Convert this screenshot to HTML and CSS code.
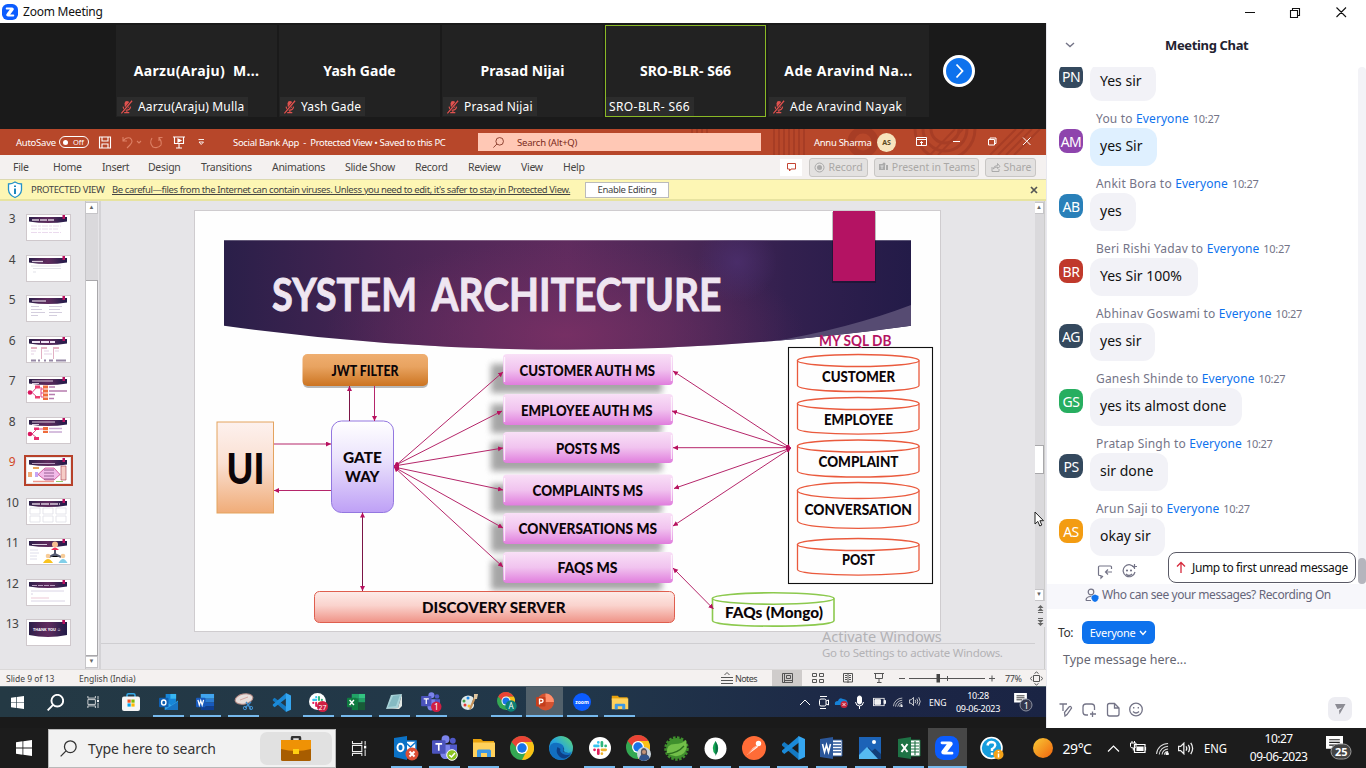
FILE: index.html
```html
<!DOCTYPE html>
<html lang="en">
<head>
<meta charset="utf-8">
<title>Zoom Meeting</title>
<link rel="stylesheet" href="styles.css">
</head>
<body>
<svg class="defs" width="0" height="0">
  <defs>
    <linearGradient id="banner" x1="0" x2="1"><stop offset="0" stop-color="#2a1f49"/><stop offset=".25" stop-color="#4a2554"/><stop offset=".5" stop-color="#5f2b5e"/><stop offset=".65" stop-color="#4d2857"/><stop offset=".82" stop-color="#33204f"/><stop offset="1" stop-color="#231b48"/></linearGradient>
    <radialGradient id="glow"><stop offset="0" stop-color="#7a3065" stop-opacity=".85"/><stop offset="1" stop-color="#6d2e62" stop-opacity="0"/></radialGradient>
    <radialGradient id="glow2"><stop offset="0" stop-color="#4d3070" stop-opacity=".75"/><stop offset="1" stop-color="#4d3070" stop-opacity="0"/></radialGradient>
    <linearGradient id="pink" x2="0" y2="1"><stop offset="0" stop-color="#f9e0f7"/><stop offset=".5" stop-color="#f1c3ef"/><stop offset="1" stop-color="#e07ddd"/></linearGradient>
    <linearGradient id="orange" x2="0" y2="1"><stop offset="0" stop-color="#efae70"/><stop offset=".4" stop-color="#e8a360"/><stop offset="1" stop-color="#cc7421"/></linearGradient>
    <linearGradient id="peach" x2="0" y2="1"><stop offset="0" stop-color="#fdf1ee"/><stop offset=".45" stop-color="#fae0d2"/><stop offset="1" stop-color="#f0ac78"/></linearGradient>
    <linearGradient id="violet" x2="0" y2="1"><stop offset="0" stop-color="#fff"/><stop offset=".4" stop-color="#ece4fc"/><stop offset="1" stop-color="#bea0f6"/></linearGradient>
    <linearGradient id="salmon" x2="0" y2="1"><stop offset="0" stop-color="#fdebe8"/><stop offset=".45" stop-color="#fad3cd"/><stop offset="1" stop-color="#ef9286"/></linearGradient>
    <linearGradient id="sun" x2="1" y2="1"><stop offset="0" stop-color="#f8cb36"/><stop offset="1" stop-color="#f1630d"/></linearGradient>
    <linearGradient id="edgeg" x1="0" x2="1" y1="1" y2="0"><stop offset="0" stop-color="#1570c0"/><stop offset=".5" stop-color="#27a5de"/><stop offset="1" stop-color="#63dc6c"/></linearGradient>
    <filter id="blur" x="-20%" y="-50%" width="140%" height="200%"><feGaussianBlur stdDeviation="3"/></filter>
    <marker id="ae" markerUnits="userSpaceOnUse" markerWidth="6" markerHeight="6" refX="5" refY="2.5" orient="auto-start-reverse"><path d="M0 0L5 2.5L0 5z" fill="#b8105f"/></marker>

    <symbol id="i-win" viewBox="0 0 16 16"><path d="M0 2.3L6.5 1.3V7.6H0zM7.3 1.2L16 0V7.6H7.3zM0 8.4H6.5V14.7L0 13.7zM7.3 8.4H16V16L7.3 14.8z" fill="#fff"/></symbol>
    <symbol id="i-search" viewBox="0 0 16 16"><circle cx="9.7" cy="6.3" r="5.5" fill="none" stroke="currentColor" stroke-width="var(--sw,1.2)"/><path d="M5.7 10.2L.6 15.4" stroke="currentColor" stroke-width="var(--sw,1.2)"/></symbol>
    <symbol id="i-view" viewBox="0 0 16 16"><path d="M.5 0V2.8H10.5V0M.5 16V13.2H10.5V16M.5 4.8H10.5V11.2H.5zM14 0V4M14 9V16" fill="none" stroke="#eee" stroke-width="1.1"/><path d="M12.8 5H15.2V8H12.8z" fill="#fff"/></symbol>
    <symbol id="i-outlook" viewBox="0 0 20 20"><path d="M7 1H18V9L13 14L7 9z" fill="#1686d9"/><path d="M12 1H18V6H12z" fill="#38b6f1"/><path d="M6 8L13 13L20 8V18H6z" fill="#32a7ec"/><path d="M6 18L20 9V18z" fill="#1874c4"/><rect y="5" width="10" height="10" rx="1" fill="#0f5fb3"/><ellipse cx="5" cy="10" rx="2.3" ry="2.7" fill="none" stroke="#fff" stroke-width="1.5"/></symbol>
    <symbol id="i-word" viewBox="0 0 20 20"><path d="M5 1H19V6H5z" fill="#41a5ee"/><path d="M5 6H19V10H5z" fill="#2b7cd3"/><path d="M5 10H19V14H5z" fill="#185abd"/><path d="M5 14H19V18H5z" fill="#103f91"/><rect y="5" width="10" height="10" rx="1" fill="#185abd"/><path d="M2 7.3L3.5 12.7L5 8L6.5 12.7L8 7.3" fill="none" stroke="#fff" stroke-width="1.3"/></symbol>
    <symbol id="i-excel" viewBox="0 0 20 20"><path d="M5 1H12V6H5z" fill="#21a366"/><path d="M12 1H19V6H12z" fill="#33c481"/><path d="M5 6H12V18H5z" fill="#107c41"/><path d="M12 6H19V10H12z" fill="#21a366"/><path d="M12 10H19V18H12z" fill="#185c37"/><rect y="5" width="10" height="10" rx="1" fill="#107c41"/><path d="M2.7 7.3L7.3 12.7M7.3 7.3L2.7 12.7" stroke="#fff" stroke-width="1.5"/></symbol>
    <symbol id="i-teams" viewBox="0 0 24 24"><circle cx="13" cy="4" r="3.8" fill="#7b83eb"/><circle cx="20" cy="5.5" r="2.8" fill="#5059c9"/><path d="M8 9H18V17a5 5 0 0 1-10 2z" fill="#7b83eb"/><path d="M17 9H24V15a4 4 0 0 1-6 3z" fill="#5059c9"/><rect y="5" width="13" height="13" rx="1" fill="#4b53bc"/><path d="M3.3 8.5H9.7M6.5 8.5V15" stroke="#fff" stroke-width="1.6"/></symbol>
    <symbol id="i-code" viewBox="0 0 24 24"><path d="M1 8L3.3 6L18 17.5V24L1 9.5z" fill="#1479c2"/><path d="M1 16L3.3 18L18 6.5V0L1 14.5z" fill="#1b8ad8"/><path d="M17.5 0L24 3V21L17.5 24z" fill="#35a6f0"/></symbol>
    <symbol id="i-slack" viewBox="0 0 22 22"><circle cx="11" cy="11" r="11" fill="#fff"/><g stroke-width="2.7" stroke-linecap="round"><path d="M9.300 5.300V5.400M9.300 8.900H5.500" stroke="#36c5f0"/><path d="M12.900 5.300V8.900M16.700 8.900H16.600" stroke="#2eb67d"/><path d="M12.900 16.700V16.600M12.900 12.800H16.700" stroke="#ecb22e"/><path d="M9.300 12.800V16.700M5.500 12.800H5.600" stroke="#e01e5a"/></g></symbol>
    <symbol id="i-chrome" viewBox="0 0 24 24"><circle cx="12" cy="12" r="12" fill="#34a853"/><path d="M12 6H22.4A12 12 0 0 1 12 24L17 14z" fill="#fbc116"/><path d="M1.6 6A12 12 0 0 1 22.4 6H12L8 13z" fill="#ea4335"/><circle cx="12" cy="12" r="6" fill="#fff"/><circle cx="12" cy="12" r="4.7" fill="#1a73e8"/></symbol>
    <symbol id="i-folder" viewBox="0 0 22 20"><path d="M0 1H8L10 3H21V7H0z" fill="#e8a10c"/><path d="M0 4.5H22V19H0z" fill="#ffd15c"/><path d="M4 19V13a1.5 1.5 0 0 1 1.5-1.5H16.500a1.5 1.5 0 0 1 1.500 1.500V19H14V15H8V19z" fill="#3d98e4"/></symbol>
    <symbol id="i-zoom" viewBox="0 0 24 24"><rect width="24" height="24" rx="8.500" fill="#0b5cff"/><path d="M7 6.800H14.500Q17.500 6.800 15.700 9L10 16.300M17 17.200H9.500Q6.500 17.200 8.300 15L14 7.700" fill="none" stroke="#fff" stroke-width="2.800" stroke-linecap="round"/></symbol>
    <symbol id="i-wifi" viewBox="0 0 14 14"><g fill="none" stroke="#ddd" stroke-width="1.100"><path d="M.6 13A12.500 12.500 0 0 1 13 1.500"/><path d="M3.500 13.500A10 10 0 0 1 13 4.500"/><path d="M6.500 13.500A7 7 0 0 1 13 7.500"/><path d="M9 13.500A4 4 0 0 1 13 10.200"/></g><circle cx="12" cy="12.700" r="1.200" fill="#fff"/></symbol>
    <symbol id="i-vol" viewBox="0 0 16 12"><g fill="none" stroke="#eee"><path d="M.5 4V8H2.500L5.500 11V1L2.500 4zM7.500 4Q9 6 7.500 8M9.700 2.500Q12 6 9.700 9.500M12 .8Q15.500 6 12 11.200"/></g></symbol>
    <symbol id="i-note" viewBox="0 0 16 15"><path d="M0 0H16V12H12V15L9 12H0z" fill="#fff"/><path d="M3 3.500H13M3 6H13M3 8.500H10" stroke="#222" stroke-width="1.100"/></symbol>
    <symbol id="i-batt" viewBox="0 0 14 9"><rect x=".5" y=".5" width="11.500" height="8" fill="none" stroke="#eee"/><path d="M2 2H8V7H2zM12 3H13.500V6H12z" fill="#eee"/></symbol>
    <symbol id="i-mute" viewBox="0 0 14 15"><rect x="5" y="1" width="5" height="8" rx="2.500" fill="#e0524f"/><path d="M3.300 7Q4 10.700 7.300 10.700Q10.700 10.700 11.500 7M7.400 10.700V13.500M4.500 13.500H10" stroke="#e0524f" stroke-width="1.200" fill="none"/><path d="M12.500 1L2 14" stroke="#242424" stroke-width="2.500"/><path d="M13 .8L1.500 14.300" stroke="#e0524f" stroke-width="1.400"/></symbol>

    <symbol id="t-banner" viewBox="0 0 43 25"><rect width="43" height="25" fill="#fff"/><path d="M2 2H40V6.500Q21 9.500 2 6.500z" fill="url(#banner)"/><path d="M35.500 0H38V4H35.500z" fill="#b8105f"/></symbol>
  </defs>
</svg>

<div class="titlebar"><svg class="zl"><use href="#i-zoom"/></svg><span>Zoom Meeting</span>
  <svg class="wctl" width="110" height="20" viewBox="0 0 110 20"><path d="M4 10.500H14M49.500 8.500H56.500V15.500H49.500zM51.500 8.500V6.500H58.500V13.500H56.500M95.500 5.500L105 15M105 5.500L95.500 15" fill="none" stroke="#111" stroke-width="1.100"/></svg>
</div>

<div class="main">
<section class="left">
  <div class="gallery">
    <div class="tile aar"><b>Aarzu(Araju)&nbsp; M...</b><span><svg><use href="#i-mute"/></svg>Aarzu(Araju) Mulla</span></div>
    <div class="tile"><b>Yash Gade</b><span><svg><use href="#i-mute"/></svg>Yash Gade</span></div>
    <div class="tile"><b>Prasad Nijai</b><span><svg><use href="#i-mute"/></svg>Prasad Nijai</span></div>
    <div class="tile active"><b>SRO-BLR- S66</b><span>SRO-BLR- S66</span></div>
    <div class="tile ade"><b>Ade Aravind Na...</b><span><svg><use href="#i-mute"/></svg>Ade Aravind Nayak</span></div>
    <svg class="next" width="32" height="32"><circle cx="16" cy="16" r="14.500" fill="#0e72ed" stroke="#fff" stroke-width="3"/><path d="M13.500 9.500L19.500 16L13.500 22.500" fill="none" stroke="#fff" stroke-width="1.800"/></svg>
  </div>

  <div class="ptitle">
    <span class="as">AutoSave</span><span class="tog"><i></i>Off</span>
    <svg width="120" height="20" viewBox="98 132 120 20" fill="none" stroke="#fff" stroke-width="1.100"><path d="M99.500 137H110.500V148H99.500zM102 137V141H108V137M102 148V144H108V148"/><g stroke="#dd8065"><path d="M123 137V141H127M123 141Q126 137 130 138Q134 141 130 145L127 148M137 141L139 143L141 141M152 138Q149 143 153 147Q158 149 161 145Q162 141 159 138M159 141V137.500H162.500"/></g><path d="M173 137H185M174.500 137V143.500H183.500V137M179 143.500V148M176 148H182"/><path d="M178 139L181 140.500L178 142z" fill="#fff"/><path d="M198.500 139.500H204M199 142L201.200 144.500L203.500 142z" stroke-width=".9"/></svg>
    <span class="ptt">Social Bank App&nbsp; -&nbsp; Protected View • Saved to this PC</span>
    <span class="psearch"><svg><use href="#i-search"/></svg>Search (Alt+Q)</span>
    <span class="puser">Annu Sharma</span><span class="pav">AS</span>
    <svg width="128" height="20" viewBox="910 132 128 20" fill="none" stroke="#fff" stroke-width="1"><path d="M917.500 137.500H927.500V145.500H917.500zM917.500 139.500H927.500M922.500 145V141.500M921 143L922.500 141.500L924 143M954 141.500H961M989.500 139.500H995.500V145H989.500zM991 139.500V138H997V143.500H995.500M1024 137.500L1031.500 145M1031.500 137.500L1024 145"/></svg>
    <svg class="pattern" viewBox="690 129 356 26" width="356" height="26" fill="none" stroke="#9b3622" stroke-width="2" opacity=".55"><path d="M692 129V134M697 129V134M702 129V134M707 129V134M774 129V155M779 129V155M784 129V155M789 129V155M794 129V155M799 129V155M804 129V155"/><circle cx="863" cy="142" r="12" stroke-width="7"/><path d="M930 155L955 129M938 155L963 129M990 155L1016 129M998 155L1024 129M1006 155L1032 129M1014 155L1040 129"/><path d="M915 129A30 30 0 0 0 975 129M923 129A22 22 0 0 0 967 129M931 129A14 14 0 0 0 959 129" stroke-width="3"/></svg>
  </div>

  <div class="ribbon">
    <span>File</span><span>Home</span><span>Insert</span><span>Design</span><span>Transitions</span><span>Animations</span><span>Slide Show</span><span>Record</span><span>Review</span><span>View</span><span>Help</span>
    <span class="cm"><svg width="11" height="11"><path d="M1.500 1.500H9.500V7H5L3.500 9V7H1.500z" fill="none" stroke="#c44432"/></svg></span>
    <span class="rb r1"><svg width="11" height="11"><circle cx="5.500" cy="5.500" r="4.500" fill="none" stroke="#aaa"/><circle cx="5.500" cy="5.500" r="2.500" fill="#aaa"/></svg>Record</span>
    <span class="rb r2"><svg width="11" height="11"><path d="M1 2H7V8H1zM8 3H10V8H8z" fill="#aaa"/><circle cx="6" cy="2" r="1.500" fill="#aaa"/><path d="M2.500 4H5.500M4 4V7" stroke="#ddd"/></svg>Present in Teams</span>
    <span class="rb r3"><svg width="11" height="11"><path d="M2 5V9.500H9V7M3 7Q4 3.500 7.500 3.500V1.500L10 4.500L7.500 6.500V5Q5 5 3 7z" fill="none" stroke="#aaa"/></svg>Share</span>
  </div>

  <div class="warn">
    <svg width="16" height="18" viewBox="0 0 16 18"><path d="M8 1Q11 3 14.500 3V9Q14 14 8 16.500Q2 14 1.500 9V3Q5 3 8 1z" fill="#fff" stroke="#2492c8" stroke-width="1.300"/><path d="M8 4.500V6M8 7.500V13" stroke="#1d87bf" stroke-width="2"/></svg>
    <span class="pv">PROTECTED VIEW</span><span class="care"><u>Be careful—files from the Internet can contain viruses. Unless you need to edit, it's safer to stay in Protected View.</u></span><span class="en">Enable Editing</span>
    <svg class="x" width="8" height="8"><path d="M1 1L7 7M7 1L1 7" stroke="#555" stroke-width="1.700"/></svg>
  </div>

  <div class="work">
    <div class="thumbs">
      <div class="th"><em>3</em><svg viewBox="0 0 43 25"><use href="#t-banner"/><path d="M5 5H27" stroke="#d9cbdc" stroke-width="1.300" stroke-dasharray="7 1"/><path d="M4 11H34M4 14H31M4 17.500H34" stroke="#e6d2ea" stroke-width=".8" stroke-dasharray="6 1 3 1"/></svg></div>
      <div class="th"><em>4</em><svg viewBox="0 0 43 25"><use href="#t-banner"/><path d="M5 5.500H16" stroke="#d9cbdc" stroke-width="1.300"/><path d="M4 10H34M6 12.500H34M6 16H9" stroke="#d4d4de" stroke-width=".7"/></svg></div>
      <div class="th"><em>5</em><svg viewBox="0 0 43 25"><use href="#t-banner"/><path d="M5 5H19" stroke="#d9cbdc" stroke-width="1.300"/><path d="M4 10.500H12M22 10.500H35M4 13.500H15M22 13.500H33M4 16.500H18M22 16.500H35M4 19.500H11M22 19.500H30" stroke="#c9c2d6" stroke-width=".8"/></svg></div>
      <div class="th"><em>6</em><svg viewBox="0 0 43 25"><use href="#t-banner"/><path d="M5 5H28" stroke="#f1e5f4" stroke-width="2" stroke-dasharray="8 1"/><path d="M4 11H10M15 11H20M27 11H32" stroke="#cf6286" stroke-width="1"/><path d="M4 14H9M4 17H7M17 14H22M17 17H25M28 14H32" stroke="#d9bcd9" stroke-width=".7"/><path d="M14.500 10V22M26.500 10V22" stroke="#cf7b9a" stroke-width=".6"/><path d="M4 23.500H9M11 23.500H13M17 23.500H19M22 23.500H26M29 23.500H39" stroke="#6a5680" stroke-width="1.800" opacity=".7"/></svg></div>
      <div class="th"><em>7</em><svg viewBox="0 0 43 25"><use href="#t-banner"/><path d="M5 4H26M5 6.500H12" stroke="#d9cbdc" stroke-width="1.200"/><path d="M5 15.500L10 10M5 15.500L10 20M14 10V20M14 12H17M14 16H17M14 20H17" stroke="#e0337a" stroke-width=".9" fill="none"/><circle cx="3" cy="15.500" r="2.300" fill="#d9165f"/><path d="M8 8.500H13V11.500H8zM8 19H13V21.500H8z" fill="#ea3f70"/><path d="M16 8.500H21V11.500H16zM16 12.500H21V15.500H16zM16 16.500H21V19.500H16zM16 20.500H21V23H16z" fill="#ee6c3b"/><path d="M22 10H28M22 14H40M22 17.500H28M22 21.500H27" stroke="#b67caf" stroke-width="1.300"/></svg></div>
      <div class="th"><em>8</em><svg viewBox="0 0 43 25"><use href="#t-banner"/><path d="M5 4H28M5 6.500H12" stroke="#d9cbdc" stroke-width="1"/><path d="M5 16L10 11M5 16L10 20M12 11H17" stroke="#e0337a" stroke-width=".9"/><circle cx="3" cy="16" r="2.300" fill="#d9165f"/><path d="M7 9.500H12V12H7zM7 19H12V22H7z" fill="#ea2f70"/><path d="M16 9H21V12H16zM16 12.800H21V15H16z" fill="#ee6c3b"/><path d="M22 10.500H35M22 14H35" stroke="#c9abd3" stroke-width="1.600"/></svg></div>
      <div class="th sel"><em>9</em><svg viewBox="0 0 43 25"><use href="#t-banner"/><path d="M5 5.500H28" stroke="#b59bbd" stroke-width="1"/><path d="M1 14H5V19H1z" fill="#f0ae7c"/><path d="M6 9H12V11H6z" fill="#e9a35d"/><path d="M8 14H11V19H8z" fill="#c5a4f5"/><path d="M11 16.500L18 10H27L33 16.500L27 22H18z" fill="#f2bbe9" stroke="#c32d78" stroke-width=".7"/><path d="M17 12H27M17 15H27M17 18H27M17 21H27" stroke="#7f477b" stroke-width=".8"/><path d="M34 8H39V22H34z" fill="#f6cdc7" stroke="#a43b4d" stroke-width=".6"/><path d="M6 23.500H27" stroke="#ee9a8f" stroke-width="1.500"/><path d="M29 23.500H36" stroke="#93c86b"/></svg></div>
      <div class="th"><em>10</em><svg viewBox="0 0 43 25"><use href="#t-banner"/><path d="M5 5H33" stroke="#d9cbdc" stroke-width="1.300" stroke-dasharray="8 1"/><path d="M3 9H13V15H3zM16 9H26V15H16zM29 9H39V15H29zM3 17H13V23H3zM16 17H26V23H16zM29 17H39V23H29z" fill="none" stroke="#dedee6" stroke-width=".8"/></svg></div>
      <div class="th"><em>11</em><svg viewBox="0 0 43 25"><use href="#t-banner"/><path d="M5 5.500H20" stroke="#d9cbdc"/><path d="M3 11H11M3 14H12M3 17H10M3 20H10" stroke="#d6d6e6" stroke-width=".8"/><path d="M28 11V17M22 18L28 15L34 18" stroke="#555b72" stroke-width="2"/><circle cx="28" cy="5.500" r="3" fill="#f7bd91"/><path d="M24 11Q28 6 32 11z" fill="#ef2f58"/><circle cx="21" cy="17" r="2.300" fill="#f7cc98"/><path d="M16 24Q21 16 26 24z" fill="#f9c31e"/><circle cx="36" cy="17" r="2.300" fill="#f7cc98"/><path d="M31.500 24Q36 16 40.500 24z" fill="#82cfe9"/></svg></div>
      <div class="th"><em>12</em><svg viewBox="0 0 43 25"><use href="#t-banner"/><path d="M5 5.500H28" stroke="#b59bbd" stroke-width="1" stroke-dasharray="5 1"/><path d="M4 11H37M4 14H6M4 21H38" stroke="#d1c9de" stroke-width=".8"/><path d="M4 18H22" stroke="#e5b2c4" stroke-width=".7"/></svg></div>
      <div class="th"><em>13</em><svg viewBox="0 0 43 25"><use href="#t-banner"/><path d="M2 2H40V15Q21 19 2 15z" fill="url(#banner)"/><path d="M35.500 0H38V4H35.500z" fill="#b8105f"/><text x="6" y="10.500" font-size="4.200" font-weight="bold" fill="#fff" textLength="28" lengthAdjust="spacingAndGlyphs">THANK YOU ☺</text></svg></div>
    </div>
    <div class="sb"><i class="bt">▲</i><i class="gap"></i><i class="kn"></i><i class="bt">▼</i></div>
    <div class="stage">
      <svg class="slide" width="747" height="422" viewBox="194 210 747 422">
        <rect x="194.500" y="210.500" width="746" height="421" fill="#fefefe" stroke="#cfcccf"/>
        <clipPath id="bc"><path d="M224 240.300H911V325.700Q567 373.500 224 325.700z"/></clipPath>
        <g clip-path="url(#bc)"><rect x="224" y="240" width="687" height="112" fill="url(#banner)"/><ellipse cx="565" cy="335" rx="240" ry="95" fill="url(#glow)"/><circle cx="737" cy="262" r="40" fill="url(#glow2)"/><path d="M735 347Q835 334 911 305V326V350H735z" fill="#564b72"/></g>
        <rect x="832" y="212" width="44" height="71" fill="#000" opacity=".25"/><rect x="833" y="211" width="42" height="70" fill="#b41363"/>
        <g class="lab"><text x="272" y="310.500" font-size="45" textLength="145" lengthAdjust="spacingAndGlyphs" class="st">SYSTEM</text><text x="431.500" y="310.500" font-size="45" textLength="290" lengthAdjust="spacingAndGlyphs" class="st">ARCHITECTURE</text></g>
        <g fill="#777" opacity=".65" filter="url(#blur)"><rect x="491" y="364" width="171" height="29"/><rect x="491" y="404" width="171" height="29"/><rect x="491" y="442" width="171" height="29"/><rect x="491" y="484" width="171" height="29"/><rect x="491" y="523" width="171" height="29"/><rect x="491" y="561" width="171" height="29"/></g>
        <g fill="url(#pink)"><rect x="503" y="354" width="170" height="31" rx="4"/><rect x="503" y="394" width="170" height="31" rx="4"/><rect x="503" y="432" width="170" height="31" rx="4"/><rect x="503" y="474.500" width="170" height="31" rx="4"/><rect x="503" y="513" width="170" height="31" rx="4"/><rect x="503" y="552" width="170" height="31" rx="4"/></g>
        <path d="M504.500 357V382M671.500 357V381M504.500 397V422M671.500 397V421M504.500 435V460M671.500 435V459M504.500 478V502M671.500 478V501M504.500 516V541M671.500 516V540M504.500 555V580M671.500 555V579" stroke="#fff" stroke-width="1.300" opacity=".75"/>
        <rect x="303" y="356" width="125" height="32" rx="5" fill="#888" opacity=".6"/><rect x="302.500" y="354" width="125.500" height="32" rx="5" fill="url(#orange)"/>
        <rect x="217" y="422" width="56.500" height="91" fill="url(#peach)" stroke="#e4a35f"/>
        <rect x="331.500" y="421" width="62" height="91.500" rx="10" fill="url(#violet)" stroke="#9377e0"/>
        <rect x="314.500" y="591.500" width="360" height="31" rx="5" fill="url(#salmon)" stroke="#df5e4e"/>
        <rect x="788.500" y="347.500" width="144" height="236" fill="none" stroke="#111" stroke-width="1.100"/>
        <g fill="none" stroke="#ea5a3d" stroke-width="1.300">
          <path d="M797.500 360.500V385.500C797.500 393.500 919 393.500 919 385.500V360.500"/><ellipse cx="858.200" cy="360.500" rx="60.800" ry="6"/>
          <path d="M797.500 403.500V428.500C797.500 436 919 436 919 428.500V403.500"/><ellipse cx="858.200" cy="403.500" rx="60.800" ry="6"/>
          <path d="M797.500 446V471C797.500 479 919 479 919 471V446"/><ellipse cx="858.200" cy="446" rx="60.800" ry="6"/>
          <path d="M797.500 490.500V520.500C797.500 531 919 531 919 520.500V490.500"/><ellipse cx="858.200" cy="490.500" rx="60.800" ry="8"/>
          <path d="M797.500 544.500V569.500C797.500 577 919 577 919 569.500V544.500"/><ellipse cx="858.200" cy="544.500" rx="60.800" ry="6"/>
          <g stroke="#8cc94e" stroke-width="1.600"><path d="M712.500 598.500V620.500C712.500 628 834 628 834 620.500V598.500"/><ellipse cx="773.200" cy="598.500" rx="60.800" ry="5.700"/></g>
        </g>
        <g class="lab">
          <text x="519.500" y="376" textLength="135.500" lengthAdjust="spacingAndGlyphs">CUSTOMER AUTH MS</text>
          <text x="521" y="416" textLength="131.500" lengthAdjust="spacingAndGlyphs">EMPLOYEE AUTH MS</text>
          <text x="556" y="453.500" textLength="64" lengthAdjust="spacingAndGlyphs">POSTS MS</text>
          <text x="532.500" y="495.500" textLength="110.500" lengthAdjust="spacingAndGlyphs">COMPLAINTS MS</text>
          <text x="518.500" y="533.500" textLength="138.500" lengthAdjust="spacingAndGlyphs">CONVERSATIONS MS</text>
          <text x="557.500" y="572.500" textLength="60" lengthAdjust="spacingAndGlyphs">FAQS MS</text>
          <text x="331.500" y="375.500" textLength="67" lengthAdjust="spacingAndGlyphs">JWT FILTER</text>
          <text x="343" y="463" textLength="39" lengthAdjust="spacingAndGlyphs">GATE</text>
          <text x="345" y="481.500" textLength="34.500" lengthAdjust="spacingAndGlyphs">WAY</text>
          <text x="226.500" y="484" font-size="42" textLength="38" lengthAdjust="spacingAndGlyphs" class="ui">UI</text>
          <text x="422" y="613" textLength="143.500" lengthAdjust="spacingAndGlyphs">DISCOVERY SERVER</text>
          <text x="819" y="346" textLength="72.500" lengthAdjust="spacingAndGlyphs" class="db">MY SQL DB</text>
          <text x="822" y="382" textLength="73" lengthAdjust="spacingAndGlyphs">CUSTOMER</text>
          <text x="824" y="424.500" textLength="69" lengthAdjust="spacingAndGlyphs">EMPLOYEE</text>
          <text x="818.500" y="467" textLength="80" lengthAdjust="spacingAndGlyphs">COMPLAINT</text>
          <text x="804.500" y="515" textLength="107.500" lengthAdjust="spacingAndGlyphs">CONVERSATION</text>
          <text x="842" y="565" textLength="33" lengthAdjust="spacingAndGlyphs">POST</text>
          <text x="725" y="617.500" textLength="98" lengthAdjust="spacingAndGlyphs">FAQs (Mongo)</text>
        </g>
        <g stroke="#b5266a" stroke-width="1" fill="none">
          <path d="M394 467L503 372" marker-start="url(#ae)" marker-end="url(#ae)"/><path d="M394 466L502 411" marker-start="url(#ae)" marker-end="url(#ae)"/><path d="M394 466L503 448" marker-start="url(#ae)" marker-end="url(#ae)"/><path d="M394 467L503 490" marker-start="url(#ae)" marker-end="url(#ae)"/><path d="M394 467L503 528" marker-start="url(#ae)" marker-end="url(#ae)"/><path d="M394 467L503 567" marker-start="url(#ae)" marker-end="url(#ae)"/>
          <path d="M791 448.500L673 371" marker-start="url(#ae)" marker-end="url(#ae)"/><path d="M791 448.500L672 411" marker-start="url(#ae)" marker-end="url(#ae)"/><path d="M791 447.700H673" marker-start="url(#ae)" marker-end="url(#ae)"/><path d="M791 448L674 488.500" marker-start="url(#ae)" marker-end="url(#ae)"/><path d="M791 448L673 526" marker-start="url(#ae)" marker-end="url(#ae)"/>
          <path d="M673 568L713.500 609" marker-start="url(#ae)" marker-end="url(#ae)"/>
          <path d="M349.500 421V386" stroke="#7c1547" marker-end="url(#ae)"/><path d="M374.500 386V421" marker-end="url(#ae)"/><path d="M274 444H331" marker-end="url(#ae)"/><path d="M331 490.500H274" marker-end="url(#ae)"/><path d="M362.500 512.500V591" stroke="#7c1547" marker-start="url(#ae)" marker-end="url(#ae)"/>
        </g>
      </svg>
      <div class="wm"><p>Activate Windows</p><small>Go to Settings to activate Windows.</small></div>
    </div>
    <div class="sb sr"><i class="bt">▲</i><i class="gap g2"></i><i class="kn k2"></i><i class="gap g3"></i><i class="bt">▼</i><svg width="11" height="26" fill="#666"><path d="M5.500 4L8.500 7H2.500zM5.500 7L8.500 10H2.500zM3 11H8V12H3zM3 17H8V18H3zM2.500 19H8.500L5.500 22zM2.500 22H8.500L5.500 25z"/></svg></div>
    <svg class="cursor" width="10" height="16"><path d="M1 1V13L3.800 10.400L5.800 15L7.800 14L5.900 9.700H9.500z" fill="#fff" stroke="#222"/></svg>
  </div>

  <div class="status">
    <span class="s1">Slide 9 of 13</span><span class="s2">English (India)</span>
    <svg width="326" height="17" viewBox="720 670 326 17" fill="none" stroke="#555" stroke-width="1"><rect x="772" y="670" width="30" height="17" fill="#cfcccb" stroke="none"/><path d="M721 677.500H733M721 680.500H733M721 683.500H733M724.500 675L727 672.500L729.500 675M782.500 673.500H792.500V682.500H782.500zM784.500 674V682M786.500 675.500H790.500V678.500H786.500zM785 680.500H792M812.500 673.500H816.500V676.500H812.500zM819.500 673.500H823.500V676.500H819.500zM812.500 679.500H816.500V682.500H812.500zM819.500 679.500H823.500V682.500H819.500zM843.500 673.500H852.500V682H843.500zM848 673.500V683M845 675.500H847M845 677.500H847M845 679.500H847M849 675.500H851M849 677.500H851M849 679.500H851M874 673.500H884M875.500 673.500V678.500H882.500V673.500M879 678.500V682M877 682.500H881.500M899 678.500H905M909 678.500H985M947.500 676V681M989 678.500H995M992 675.500V681.500M1033.500 675.500H1039.500V681.500H1033.500z"/><path d="M936.500 674H940V682.500H936.500z" fill="#444" stroke="none"/><path d="M1034.500 673.500L1036.500 672L1038.500 673.500M1034.500 683.500L1036.500 685L1038.500 683.500M1032 676.500L1030.500 678.500L1032 680.500M1041 676.500L1042.500 678.500L1041 680.500"/><g class="stt"><text x="735" y="682" textLength="22.500">Notes</text><text x="1005" y="681.500" textLength="17">77%</text></g></svg>
  </div>

  <div class="rbar">
    <div class="ricons">
      <span><svg width="13" height="13"><use href="#i-win"/></svg></span>
      <span class="sw"><svg width="17" height="17"><use href="#i-search"/></svg></span>
      <span><svg width="13" height="12"><use href="#i-view"/></svg></span>
      <span><svg width="18" height="18" viewBox="0 0 18 18"><path d="M5 5V2Q5 .8 6.500 .8H11.500Q13 .8 13 2V5" fill="none" stroke="#35a9e8" stroke-width="1.500"/><rect y="3.500" width="18" height="14.500" rx="2" fill="#f5f5f5"/><path d="M5.500 6.500H8.700V9.700H5.500z" fill="#f25022"/><path d="M9.400 6.500H12.600V9.700H9.400z" fill="#7fba00"/><path d="M5.500 10.400H8.700V13.600H5.500z" fill="#00a4ef"/><path d="M9.400 10.400H12.600V13.600H9.400z" fill="#ffb900"/></svg></span>
      <span class="on"><svg width="19" height="19"><use href="#i-outlook"/></svg></span>
      <span class="on"><svg width="19" height="19"><use href="#i-word"/></svg></span>
      <span class="on"><svg width="20" height="18" viewBox="0 0 20 18"><ellipse cx="10" cy="6" rx="9" ry="5" fill="#e7dedb" stroke="#b58b85" transform="rotate(-12 10 6)"/><path d="M6 7L14 4" stroke="#d6a7a0"/><path d="M12 9L17 16M17 9L11 15" stroke="#408dca" stroke-width="1.300"/><circle cx="11" cy="15" r="1.700" fill="none" stroke="#408dca"/><circle cx="17" cy="15" r="1.700" fill="none" stroke="#408dca"/></svg></span>
      <span><svg width="19" height="19"><use href="#i-code"/></svg></span>
      <span class="on"><svg width="19" height="19" viewBox="0 0 19 19"><use href="#i-slack" width="17" height="17"/><circle cx="13.500" cy="13.500" r="5.500" fill="#cf1f43"/><text x="9.600" y="16.500" font-size="7.500" fill="#fff" textLength="8" lengthAdjust="spacingAndGlyphs">27</text></svg></span>
      <span class="on"><svg width="19" height="19"><use href="#i-excel"/></svg></span>
      <span class="on"><svg width="18" height="18" viewBox="0 0 18 18"><path d="M6 2L17 1L13 15L1 16z" fill="#a9d3d8"/><path d="M8 3L15 2L11 13L3 14z" fill="#85bac2"/><path d="M13 15L17 1V13L14 16H1z" fill="#e2e8e4"/></svg></span>
      <span class="on"><svg width="21" height="20" viewBox="0 0 24 23"><use href="#i-teams" width="22" height="22"/><circle cx="17.500" cy="17" r="6" fill="#cf1f43"/><text x="15" y="20.500" font-size="9.500" fill="#fff">1</text></svg></span>
      <span><svg width="19" height="18" viewBox="0 0 19 18"><path d="M1 10Q1 3 8 2.500Q15 3 13 7Q11 10 14 11Q15 16 8 17Q1 16 1 10z" fill="#dfe9e9"/><circle cx="4" cy="8" r="1.500" fill="#43a047"/><circle cx="8" cy="5" r="1.500" fill="#1e88e5"/><circle cx="5" cy="12" r="1.500" fill="#e53935"/><circle cx="9" cy="13" r="1.500" fill="#fbc02d"/><path d="M16 2L10 16" stroke="#c7935b" stroke-width="2"/><path d="M14 1L18 1L17 6H14z" fill="#dfc6a0"/></svg></span>
      <span class="on"><svg width="20" height="20" viewBox="0 0 20 20"><use href="#i-chrome" width="18" height="18"/><circle cx="14" cy="14" r="5.700" fill="#0e8074"/><text x="11.500" y="17" font-size="8" fill="#fff">A</text></svg></span>
      <span class="on hi"><svg width="19" height="18" viewBox="0 0 19 18"><circle cx="10.500" cy="9" r="8.500" fill="#d35230"/><path d="M10.500 .5A8.500 8.500 0 0 1 19 9H10.500z" fill="#ff8f6b"/><rect x="1" y="4" width="9.500" height="9.500" rx="1" fill="#c43e1c"/><path d="M4.500 11.500V6.200H6Q8 6.200 8 7.800Q8 9.500 6 9.500H4.500" fill="none" stroke="#fff" stroke-width="1.300"/></svg></span>
      <span class="on"><svg width="18" height="18" viewBox="0 0 18 18"><circle cx="9" cy="9" r="9" fill="#0b5cff"/><text x="2.300" y="11" font-size="6" font-weight="bold" fill="#fff" textLength="13.500" lengthAdjust="spacingAndGlyphs">zoom</text></svg></span>
      <span class="on"><svg width="18" height="15"><use href="#i-folder"/></svg></span>
    </div>
    <svg class="rtray" width="160" height="30" viewBox="794 687 160 30" fill="none" stroke="#fff"><path d="M800 705L805 700L810 705"/><rect x="819.500" y="699" width="6.500" height="7" rx="1.500"/><path d="M826 701L828.500 700V705L826 704M820 696.500H827M820 708.500H826"/><path d="M835 705Q834 701 838 701Q839 697 843 699Q848 699 848 705z" fill="#1681d6" stroke="none"/><circle cx="844" cy="704.500" r="3.500" fill="#c6263c" stroke="none"/><path d="M842.500 703L845.500 706M845.500 703L842.500 706" stroke-width=".8"/><rect x="857.500" y="696" width="4" height="8" rx="2" fill="#fff"/><path d="M855.500 702Q856 706 859.500 706Q863 706 863.500 702M859.500 706V709"/><use href="#i-batt" x="873" y="697.500" width="13" height="9"/><use href="#i-wifi" x="893" y="697" width="10" height="10"/><use href="#i-vol" x="909" y="696" width="13" height="11"/><text x="929" y="705.500" class="tt" textLength="17.500" lengthAdjust="spacingAndGlyphs">ENG</text></svg>
    <div class="rclock">10:28<br>09-06-2023</div>
    <svg class="rnote" width="22" height="22" viewBox="0 0 22 22"><use href="#i-note" x="1" y="2" width="13" height="12"/><circle cx="13" cy="14" r="6" fill="#34384d" stroke="#8b90a0"/><text x="10.800" y="17.500" font-size="9" fill="#fff">1</text></svg>
  </div>
</section>

<aside class="chat">
  <header><svg width="10" height="6" viewBox="0 0 10 6"><path d="M1 1L5 4.500L9 1" fill="none" stroke="#747487" stroke-width="1.400"/></svg><b>Meeting Chat</b></header>
  <div class="list">
    <div class="msg"><div><i class="av c1">PN</i><span class="w1">Yes sir</span></div></div>
    <div class="msg"><p>You to <a>Everyone</a><s>10:27</s></p><div><i class="av c2">AM</i><span class="me w2">yes Sir</span></div></div>
    <div class="msg"><p>Ankit Bora to <a>Everyone</a><s>10:27</s></p><div><i class="av c3">AB</i><span class="w3">yes</span></div></div>
    <div class="msg"><p>Beri Rishi Yadav to <a>Everyone</a><s>10:27</s></p><div><i class="av c4">BR</i><span class="w4">Yes Sir 100%</span></div></div>
    <div class="msg"><p>Abhinav Goswami to <a>Everyone</a><s>10:27</s></p><div><i class="av c1">AG</i><span class="w5">yes sir</span></div></div>
    <div class="msg"><p>Ganesh Shinde to <a>Everyone</a><s>10:27</s></p><div><i class="av c5">GS</i><span class="w6">yes its almost done</span></div></div>
    <div class="msg"><p>Pratap Singh to <a>Everyone</a><s>10:27</s></p><div><i class="av c1">PS</i><span class="w7">sir done</span></div></div>
    <div class="msg"><p>Arun Saji to <a>Everyone</a><s>10:27</s></p><div><i class="av c6">AS</i><span class="w8">okay sir</span></div></div>
    <div class="acts"><svg width="42" height="18" viewBox="1096 563 42 18" fill="none" stroke="#747487" stroke-width="1.200"><path d="M1103 575L1101 577V574.500H1099.500Q1098.500 574.500 1098.500 573.500V566Q1098.500 565 1099.500 565H1110.500Q1111.500 565 1111.500 566V568M1112 571H1105.500M1108 568.500L1105.500 571L1108 573.500"/><path d="M1134.500 567A6 6 0 1 0 1135 571M1126 573Q1129 576 1132 573M1134.500 563V568M1132 565.500H1137"/><circle cx="1127" cy="569.500" r=".5"/><circle cx="1131" cy="569.500" r=".5"/></svg></div>
    <div class="jump"><svg width="10" height="13"><path d="M5 12V1.500M1 5.500L5 1.500L9 5.500" fill="none" stroke="#d62a3c" stroke-width="1.300"/></svg>Jump to first unread message</div>
    <div class="track"><i></i></div>
  </div>
  <div class="who"><svg width="14" height="14" viewBox="0 0 14 14"><circle cx="6" cy="4" r="2.800" fill="none" stroke="#747487" stroke-width="1.200"/><path d="M1 12.500Q1 8.500 6 8.500M1 12.500H6" fill="none" stroke="#747487" stroke-width="1.200"/><path d="M10 6.500L13.500 8V10.500Q13 13 10 14Q7 13 6.500 10.500V8z" fill="#0e72ed"/></svg>Who can see your messages? Recording On</div>
  <div class="compose">
    <div class="to"><span>To:</span><span class="ev">Everyone <svg width="8" height="6"><path d="M1 1L4 4.500L7 1" fill="none" stroke="#fff" stroke-width="1.400"/></svg></span></div>
    <div class="ph">Type message here...</div>
    <div class="tools"><svg width="90" height="18" viewBox="1058 700 90 18" fill="none" stroke="#747487" stroke-width="1.300"><path d="M1059.500 704H1067M1063 704V711M1065 716L1064.500 712.500L1069 707Q1071 705.500 1071.500 708L1067 714.500zM1088 715H1086Q1083 715 1083 712V707Q1083 704 1086 704H1091.500Q1094.500 704 1094.500 707V710M1092.500 711.500V717M1090 714H1096M1109.500 703.500H1114.500L1119 708V714Q1119 716 1117 716H1109.500Q1107.500 716 1107.500 714V705.500Q1107.500 703.500 1109.500 703.500M1114.500 703.500V708H1119"/><circle cx="1136" cy="709.500" r="6.300"/><path d="M1133 711.500Q1136 714.500 1139 711.500M1133.700 707V708.500M1138.300 707V708.500"/></svg>
      <span class="send"><svg width="12" height="12"><path d="M1 1H11.500L5.500 11.500L5 7.500L8 4.500L3.500 6z" fill="#8c8c94"/></svg></span></div>
  </div>
</aside>
</div>

<footer>
  <span class="fw"><svg width="16" height="16"><use href="#i-win"/></svg></span>
  <div class="fs"><svg width="17" height="17"><use href="#i-search"/></svg><span>Type here to search</span><i><svg width="32" height="26" viewBox="0 0 32 26"><path d="M12 4V2Q12 1 13 1H19Q20 1 20 2V4" fill="none" stroke="#333" stroke-width="2.500"/><rect x="1" y="4" width="30" height="21" rx="1.500" fill="#a85d00"/><path d="M1 4H31V13Q16 17 1 13z" fill="#ef9205"/><rect x="13" y="13" width="6" height="5" fill="#ffcf11"/></svg></i></div>
  <span class="fv"><svg width="17" height="15"><use href="#i-view"/></svg></span>
  <div class="fi">
    <span class="on"><svg width="26" height="26" viewBox="0 0 26 26"><path d="M12 6H23V18H12z" fill="#fff" stroke="#0f78d0" stroke-width="1.500"/><path d="M12 7L17.500 12L23 7" fill="none" stroke="#0f78d0" stroke-width="1.500"/><path d="M1 3L14 1V25L1 22z" fill="#0b72c6"/><ellipse cx="7.500" cy="12.500" rx="3" ry="3.800" fill="none" stroke="#fff" stroke-width="2"/><circle cx="19" cy="19" r="6.500" fill="#dc4f35"/><path d="M16.500 16.500L21.500 21.500M21.500 16.500L16.500 21.500" stroke="#fff" stroke-width="2"/></svg></span>
    <span class="on"><svg width="26" height="26" viewBox="0 0 26 26"><use href="#i-teams" width="25" height="25"/><circle cx="20" cy="20" r="5.300" fill="#8ac322" stroke="#fff"/><path d="M17.300 20L19.500 22L23 18" fill="none" stroke="#fff" stroke-width="1.500"/></svg></span>
    <span class="on"><svg width="22" height="20"><use href="#i-folder"/></svg></span>
    <span><svg width="24" height="24"><use href="#i-chrome"/></svg></span>
    <span><svg width="24" height="24" viewBox="0 0 24 24"><circle cx="12" cy="12" r="12" fill="url(#edgeg)"/><path d="M.2 12Q2 6 9 7Q15 8 15 13Q14 15 16 16.500Q20 18 23 15.500Q20 23.500 12 24Q1 23 .2 12z" fill="#126fc0"/><path d="M8.500 11Q6 17 11 21Q16 25 22 18Q18 20 14 18Q10 16 11.500 13z" fill="#0d3f86"/><path d="M14.500 11Q16 14 14 15Q17 18 22.500 15.500Q18 17.500 15 15.500Z" fill="#1e1e1e"/></svg></span>
    <span class="on"><svg width="22" height="22"><use href="#i-slack"/></svg></span>
    <span class="on"><svg width="25" height="26" viewBox="0 0 25 26"><use href="#i-chrome" width="24" height="24"/><circle cx="18" cy="19" r="7" fill="#cbd5dc"/><path d="M13 24Q14 19 18 19Q23 19 23.500 23.500Q18 28 13 24z" fill="#30548b"/><path d="M15 20Q14 13 18 13Q22 14 21 20z" fill="#56545c"/><circle cx="18" cy="17" r="2" fill="#c49478"/></svg></span>
    <span class="on"><svg width="25" height="25" viewBox="0 0 25 25"><circle cx="12.500" cy="12.500" r="11" fill="none" stroke="#3f8f2d" stroke-width="2.500" stroke-dasharray="2.500 1.500"/><circle cx="12.500" cy="12.500" r="10.500" fill="#3f8f2d"/><path d="M3 17Q2 8 11 8Q18 8 22 4Q25 15 17 19Q10 22 3 17z" fill="#72bf49"/><path d="M3 18Q14 17 20 10" stroke="#2c701e" fill="none" stroke-width="1.300"/></svg></span>
    <span class="on"><svg width="23" height="23" viewBox="0 0 23 23"><circle cx="11.500" cy="11.500" r="11" fill="#fff"/><path d="M11.500 4Q17 12 11.500 17.500Q6 12 11.500 4z" fill="#13aa52"/><path d="M11.500 4V19Q16.500 12 11.500 4z" fill="#0b6b45"/></svg></span>
    <span class="on"><svg width="24" height="24" viewBox="0 0 24 24"><circle cx="12" cy="12" r="12" fill="#ff6c37"/><path d="M5 19L11 12L15 9L16 11L12 14z" fill="#fff"/><circle cx="16.500" cy="7.500" r="2.700" fill="#fff"/><path d="M6 18L15 9.500" stroke="#ff6c37" stroke-width=".7"/></svg></span>
    <span class="on"><svg width="24" height="24"><use href="#i-code"/></svg></span>
    <span class="on"><svg width="24" height="24" viewBox="0 0 24 24"><path d="M12 4H23V20H12z" fill="#fff" stroke="#2b579a"/><path d="M14 7H22M14 10H22M14 13H22M14 16H22" stroke="#2b579a" stroke-width="1.300"/><path d="M1 3L14 1V23L1 21z" fill="#2b579a"/><path d="M3.500 8L5.500 16L7.500 9L9.500 16L11.500 8" fill="none" stroke="#fff" stroke-width="1.600"/></svg></span>
    <span class="on"><svg width="22" height="22" viewBox="0 0 22 22"><rect width="22" height="22" fill="#1c63b7"/><path d="M9 10L13 14L16 11.500L22 17V22L9 22z" fill="#123f79"/><path d="M0 18L8 10L19 22H0z" fill="#56baf1"/><circle cx="15" cy="5" r="2" fill="#fff"/></svg></span>
    <span class="on"><svg width="24" height="24" viewBox="0 0 24 24"><path d="M12 4H23V20H12z" fill="#fff" stroke="#1e7245"/><path d="M14 7H22M14 10H22M14 13H22M14 16H22M18 5V19" stroke="#1e7245" stroke-width="1.100"/><path d="M1 3L14 1V23L1 21z" fill="#1e7245"/><path d="M4.500 8L10.500 16M10.500 8L4.500 16" stroke="#fff" stroke-width="2"/></svg></span>
    <span class="on hi"><svg width="24" height="24"><use href="#i-zoom"/></svg></span>
  </div>
  <svg class="help" width="24" height="24" viewBox="0 0 24 24"><circle cx="11.500" cy="12" r="10.500" fill="#169ddd" stroke="#fff" stroke-width="1.600"/><path d="M7.500 9.500Q8 6 11.700 6Q15.500 6.300 15.200 9.500Q14.500 12 12 13V15M12 16.500V19" fill="none" stroke="#fff" stroke-width="2.400"/><circle cx="18.500" cy="18.500" r="5" fill="#f5a218"/><path d="M18.500 15V16.300M18.500 17.500V21.500" stroke="#fff" stroke-width="1.500"/></svg>
  <svg width="20" height="20"><circle cx="10" cy="10" r="10" fill="url(#sun)"/></svg>
  <span class="deg">29°C</span>
  <svg class="ftray" width="130" height="40" viewBox="1112 728 130 40" fill="none" stroke="#fff" stroke-width="1.200"><path d="M1117 751.500L1122.500 746L1128 751.500"/><path d="M1143.500 744.500H1154V752.500H1143.500zM1154.500 747V750.500"/><path d="M1146 747H1152V750.500H1146z" fill="#fff"/><path d="M1139.500 743H1145V746.500Q1145 748 1142.300 748Q1139.500 748 1139.500 746.500zM1141 741V743M1143.500 741V743M1142.300 748V750.500" stroke-width="1"/><use href="#i-wifi" x="1165" y="742" width="13" height="13"/><use href="#i-vol" x="1187" y="742" width="17" height="13"/><text x="1213" y="752.500" class="ft" textLength="23" lengthAdjust="spacingAndGlyphs">ENG</text></svg>
  <div class="fclock">10:27<br>09-06-2023</div>
  <svg class="fnote" width="28" height="26" viewBox="0 0 28 26"><use href="#i-note" x="0" y="1" width="17" height="16"/><rect x="5" y="9" width="20" height="15" rx="7.500" fill="#444" stroke="#999"/><text x="9" y="20.500" font-size="11" font-weight="bold" fill="#fff" textLength="12.500" lengthAdjust="spacingAndGlyphs">25</text></svg>
</footer>
</body>
</html>
```
FILE: styles.css
```css
*{box-sizing:border-box}
body{margin:0;width:1366px;height:768px;overflow:hidden;background:#fff;font-family:"Noto Sans","Open Sans",sans-serif;font-size:12px;white-space:nowrap;color:#111;display:flex;flex-direction:column}
svg{display:block;flex:none}
.defs{position:absolute}
i,em,s{font-style:normal;text-decoration:none}
.titlebar{height:23px;flex:none;display:flex;align-items:center;padding-left:2px;gap:5px;font-size:12px;letter-spacing:-.22px}
.zl{width:16px;height:16px}
.wctl{margin-left:auto;margin-right:15px}
.main{height:705px;flex:none;display:flex}
.left{width:1046px;background:#1a1a1a;display:flex;flex-direction:column}
.gallery{height:106px;flex:none;display:flex;gap:2px;padding:2px 0 0 116px}
.tile{width:161px;height:92px;flex:none;background:#222;color:#fff;display:flex;flex-direction:column;justify-content:flex-end;align-items:flex-start;padding:1px}
.tile b{width:100%;text-align:center;font-size:14px;line-height:20px;margin-bottom:16px;letter-spacing:.05px}
.tile span{height:19px;background:#2c2c2c;display:flex;align-items:center;gap:5px;padding:0 4px 0 3px;font-size:12px;letter-spacing:.15px}
.tile span svg{width:13px;height:14px}
.tile.aar b{letter-spacing:.35px}
.tile.active{border:1px solid #8ab926;padding:0}
.tile.active span{letter-spacing:.4px}
.tile.ade b{letter-spacing:.5px}
.tile.ade span{letter-spacing:.35px}
.next{margin:30px 0 0 12px}
.ptitle{height:26px;flex:none;background:#b7472a;color:#fff;font-size:9.5px;display:flex;align-items:center;padding-left:16px;position:relative}
.ptitle>*{z-index:1;flex:none}
.as{width:43px;letter-spacing:-.25px}
.tog{width:30px;height:12px;border:1px solid #fff;border-radius:6px;display:flex;align-items:center;gap:5px;font-size:7.5px;padding-left:3px;margin-right:9px}
.tog i{width:5px;height:5px;border-radius:50%;background:#fff}
.ptt{width:245px;margin-left:15px;letter-spacing:-.33px}
.psearch{width:283px;height:18px;background:#ffc8b5;color:#7a2a1a;display:flex;align-items:center;gap:13px;padding-left:15px;letter-spacing:-.2px}
.psearch svg{width:11px;height:11px}
.puser{width:62px;margin-left:53px;letter-spacing:-.3px}
.pav{width:19px;height:19px;border-radius:50%;background:#f7e4bd;color:#5b4a22;display:flex;align-items:center;justify-content:center;font-size:7px;font-weight:bold;margin:0 13px 0 1px}
.ptitle>.pattern{position:absolute;right:0;top:0;z-index:0}
.ribbon{height:24px;flex:none;background:#f4f1f0;color:#484644;font-size:10.5px;display:grid;grid-template-columns:40px 49px 46px 53px 71px 73px 70px 53px 53px 42px 217px 29px 65px 111px 51px;align-items:center;padding-left:13px;letter-spacing:-.3px}
.cm{width:22px;height:17px;background:#fff;display:flex;align-items:center;justify-content:center}
.rb{height:19px;border:1px solid #c8c6c4;border-radius:3px;background:#e3e1e0;color:#aaa8a6;display:flex;align-items:center;justify-content:center;gap:3px;letter-spacing:-.05px}
.r1{width:59px}.r2{width:105px;letter-spacing:-.05px}.r3{width:51px}
.warn{height:22px;flex:none;background:#fdf6b4;border-top:1px solid #dcd9b0;border-bottom:2px solid #e7e3a0;color:#444;font-size:9.5px;display:flex;align-items:center;padding-left:7px}
.pv{width:81px;margin-left:8px;letter-spacing:-.35px}
.care{width:473px;letter-spacing:-.41px}
.en{width:84px;height:16px;background:#fff;border:1px solid #bbb;display:flex;align-items:center;justify-content:center;letter-spacing:-.35px}
.x{margin-left:361px}
.work{height:468px;flex:none;background:#e6e5e8;display:flex;position:relative}
.thumbs{width:85px;padding-top:7px}
.th{height:40.550px;display:flex;align-items:flex-start;padding-left:3px}
.th em{width:18px;display:flex;justify-content:center;font-size:12px;line-height:21px;color:#444;letter-spacing:-.6px}
.th svg{width:43px;height:25px;margin:7px 0 0 6px;outline:1px solid #cfc8cc}
.th.sel em{color:#d24726}
.th.sel svg{outline:2px solid #b7412a;outline-offset:1px;background:#fff}
.sb{width:13px;display:flex;flex-direction:column;padding-top:1px;border-left:1px solid #c6c5c8;background:#dad9dc}
.bt{height:12px;flex:none;background:#fff;border:1px solid #c6c5c8;border-left:0;font-size:6px;line-height:9px;text-align:center;color:#666}
.gap{height:66px;flex:none}
.kn{height:376px;flex:none;background:#fff;border:1px solid #a9a8ab;border-left:0}
.stage{width:936px;padding:9px 0 0 93px;border-left:2px solid #d4d3d6;margin-left:1px;background:linear-gradient(#e6e5e8 442px,#cfced1 442px,#cfced1 443px,#e6e5e8 443px);position:relative}
.sr{width:11px;margin-left:-1px;border-right:1px solid #ccc;flex:none}
.g2{height:231px}.k2{height:29px}.g3{height:115px}
.sr svg{background:#e6e5e8}
.sr::after{content:"";flex:1;background:#e6e5e8}
.wm{position:absolute;left:721px;top:426px;color:#b3b2b5}
.wm p{margin:0;font-size:14.500px;line-height:18px}
.wm small{display:block;font-size:11.500px;line-height:16px;letter-spacing:-.28px}
.cursor{position:absolute;left:1034px;top:310px}
.lab{font-family:"Lato","Inter",sans-serif;font-weight:900;font-size:14.500px;fill:#0c0508}
.lab .st{fill:#efe6f1;font-weight:700;stroke:#efe6f1;stroke-width:.9}
.lab .db{fill:#b41363;font-weight:700}
.status{height:17px;flex:none;background:#f4f1f0;border-top:1px solid #dad8d8;display:flex;align-items:center;padding-left:6px;font-size:8.500px;color:#444;width:1046px;overflow:hidden}
.s1{width:73px}.s2{width:641px}
.stt{font-size:9px;fill:#444;stroke:none}
.rbar{height:31px;flex:none;background:linear-gradient(90deg,#243944,#21374a 55%,#1c2646 85%,#1a2444);border-top:1px solid #50626b;display:flex;align-items:center;color:#fff}
.ricons{width:639px;height:30px;display:grid;grid-template-columns:repeat(17,37.630px);margin-left:-1px;flex:none}
.ricons span{display:flex;align-items:center;justify-content:center;color:#fff}
.ricons .on,.fi .on{background:linear-gradient(#76b9ed,#76b9ed) bottom/31px 2px no-repeat}
.ricons .hi{background:linear-gradient(#76b9ed,#76b9ed) bottom/100% 2px no-repeat,#52616b}
.sw{--sw:1.8}
.rtray{margin-left:156px}
.tt{font-size:9px;fill:#fff;stroke:none}
.rclock{width:48px;text-align:center;font-size:9px;line-height:13.500px;letter-spacing:-.3px}
.rnote{margin-left:11px}
.chat{width:320px;border-left:1px solid #e8e8ee;display:flex;flex-direction:column}
.chat header{height:44px;flex:none;display:flex;align-items:center;padding-left:18px;font-size:13px;gap:90px;color:#222230}
.chat header b{letter-spacing:-.35px}
.list{height:517px;flex:none;overflow:hidden;position:relative}
.msg{height:65px}
.msg:first-child{height:46px;margin-top:-4px}
.msg p{margin:0 0 0 49px;height:19px;line-height:19px;font-size:12px;color:#747487;letter-spacing:.2px}
.msg a{color:#0e72ed;letter-spacing:.08px}
.msg s{font-size:11px;margin-left:4px;letter-spacing:-.3px}
.msg>div{display:flex;padding-left:12px}
.av{width:24px;height:24px;border-radius:8px;margin:1px 7px 0 0;color:#fff;font-size:14px;display:flex;align-items:center;justify-content:center;letter-spacing:-.5px}
.c1{background:#34495e}.c2{background:#8e44ad}.c3{background:#2980b9}.c4{background:#c0392b}.c5{background:#27ae60}.c6{background:#f39c12}
.msg>div span{height:38px;border-radius:12px;background:#f2f2f7;padding-left:10px;font-size:14px;line-height:35px}
.msg>div .me{background:#dff0ff}
.w1{width:66px}.w2{width:67px}.w3{width:46px}.w4{width:108px}.w5{width:65px}.w6{width:152px}.w7{width:78px}.w8{width:75px}
.acts{padding:0 0 0 49px}
.jump{position:absolute;left:121px;top:485px;width:188px;height:31px;border:1px solid #5a5a66;border-radius:8px;background:#fff;display:flex;align-items:center;gap:6px;padding-left:7px;font-size:12px;letter-spacing:-.38px}
.track{position:absolute;right:0;top:0;width:8px;height:517px;background:#f3f3f7;border-radius:4px}
.track i{display:block;margin-top:491px;height:26px;border-radius:4px;background:#b5b5bd}
.who{height:25px;flex:none;background:#f7f7fb;color:#66667a;font-size:12px;display:flex;align-items:center;gap:3px;padding:0 0 4px 38px;letter-spacing:-.41px}
.compose{display:flex;flex-direction:column;flex:1;padding:12px 14px 7px 11px;color:#333}
.to{display:flex;align-items:center;gap:9px;letter-spacing:-.4px}
.ev{width:73px;height:23px;border-radius:6px;background:#0e72ed;color:#fff;display:flex;align-items:center;justify-content:center;gap:4px;font-size:11px;letter-spacing:-.25px}
.ph{padding:7px 0 0 5px;font-size:12.500px;color:#666672}
.tools{margin-top:auto;display:flex;justify-content:space-between;align-items:center}
.send{width:24px;height:24px;border-radius:7px;background:#ededf2;display:flex;align-items:center;justify-content:center}
footer{height:40px;flex:none;background:#1c1c1c;display:flex;align-items:center;color:#fff}
.fw{width:48px;padding-left:16px}
.fs{width:288px;height:39px;align-self:flex-end;background:#f2f2f2;border:1px solid #b9b9b9;color:#333;display:flex;align-items:center;padding-left:11px;gap:11px;font-size:14px}
.fs span{width:161px;letter-spacing:-.05px}
.fs i{width:72px;height:33px;border-radius:7px;background:#e1e1e1;display:flex;align-items:center;justify-content:center}
.fv{width:51px;padding-left:15px}
.fi{height:40px;display:grid;grid-template-columns:repeat(15,38.650px);flex:none}
.fi span{display:flex;align-items:center;justify-content:center}
.fi .hi{background:linear-gradient(#76b9ed,#76b9ed) bottom/100% 2px no-repeat,#474747}
.help{margin:0 29px 0 13px}
.deg{width:50px;padding-left:10px;font-size:14px;letter-spacing:-.5px}
.ft{font-size:12px;fill:#fff;stroke:none}
.fclock{width:72px;text-align:center;font-size:12px;line-height:18px;letter-spacing:-.5px;margin-left:10px}
.fnote{margin-left:11px}
```
